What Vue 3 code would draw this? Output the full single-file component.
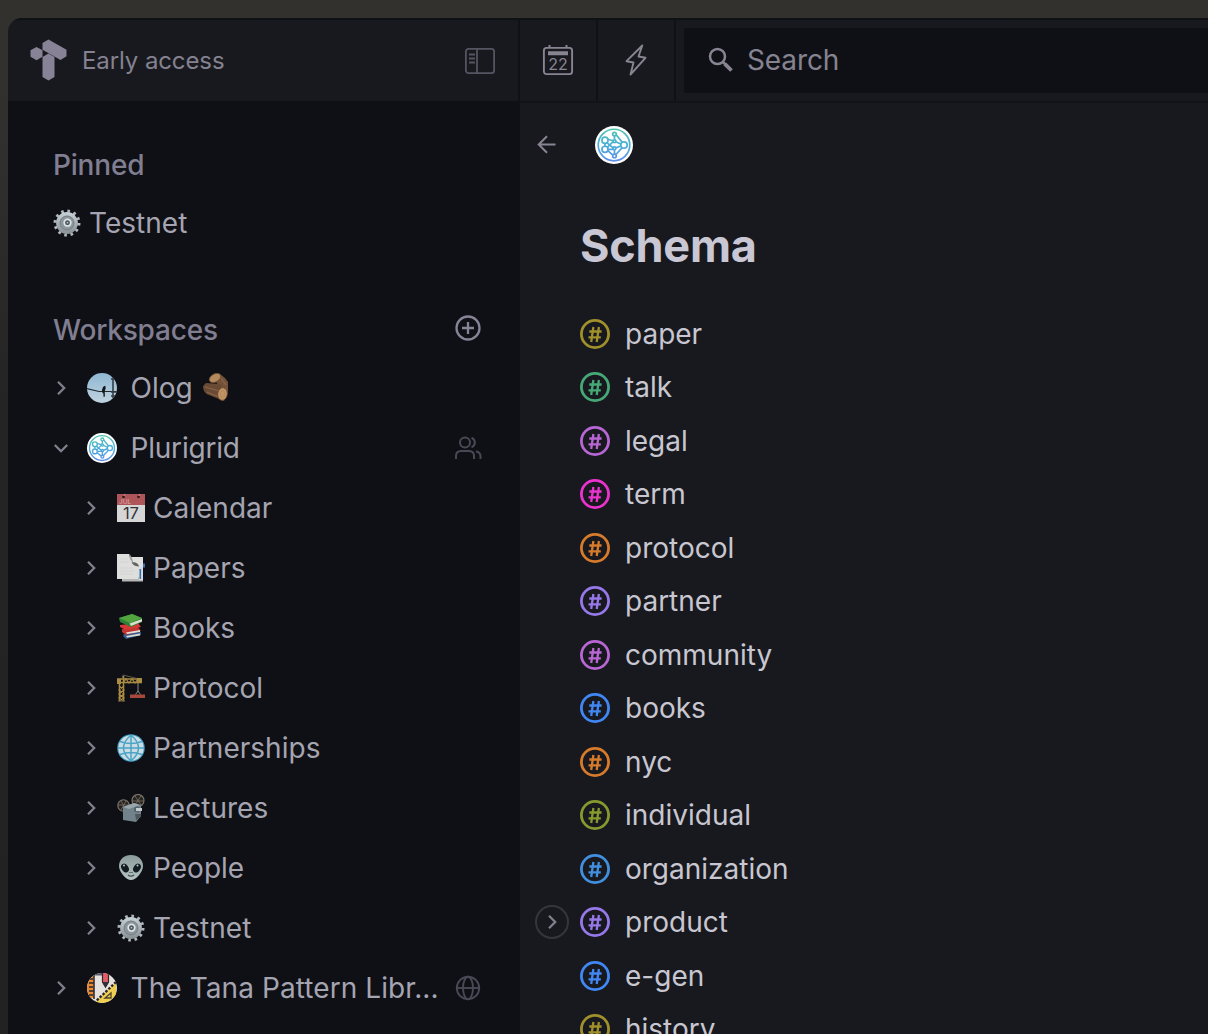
<script setup>
const folders = [
  { name: 'Calendar', icon: 'e-cal' },
  { name: 'Papers', icon: 'e-papers' },
  { name: 'Books', icon: 'e-books' },
  { name: 'Protocol', icon: 'e-crane' },
  { name: 'Partnerships', icon: 'e-globe' },
  { name: 'Lectures', icon: 'e-projector' },
  { name: 'People', icon: 'e-alien' },
  { name: 'Testnet', icon: 'e-gear' },
]
const tags = [
  { name: 'paper', color: '#a0902b' },
  { name: 'talk', color: '#47a877' },
  { name: 'legal', color: '#b766d4' },
  { name: 'term', color: '#ea33ce' },
  { name: 'protocol', color: '#d67a2b' },
  { name: 'partner', color: '#9678e8' },
  { name: 'community', color: '#b766d4' },
  { name: 'books', color: '#4187f3' },
  { name: 'nyc', color: '#d67a2b' },
  { name: 'individual', color: '#87992e' },
  { name: 'organization', color: '#418fdf' },
  { name: 'product', color: '#9678e8', open: true },
  { name: 'e-gen', color: '#4187f3' },
  { name: 'history', color: '#a0902b' },
]
</script>

<template>
  <div class="desktop">
    <svg class="defs" width="0" height="0" aria-hidden="true">
      <defs>
        <linearGradient id="teal" x1="0" y1="0" x2="0" y2="40" gradientUnits="userSpaceOnUse">
          <stop offset="0" stop-color="#50c8a4" /><stop offset=".5" stop-color="#4aafd8" /><stop offset="1" stop-color="#6389ee" />
        </linearGradient>
        <linearGradient id="metal" x1="0" y1="0" x2="0" y2="1">
          <stop offset="0" stop-color="#c3ced4" /><stop offset="1" stop-color="#8b9499" />
        </linearGradient>
        <linearGradient id="skin" x1="0" y1="0" x2="0" y2="1">
          <stop offset="0" stop-color="#8b9b9b" /><stop offset="1" stop-color="#b5c4c2" />
        </linearGradient>
        <linearGradient id="sky" x1="0" y1="0" x2="0" y2="1">
          <stop offset="0" stop-color="#8db6d2" /><stop offset="1" stop-color="#c2d4e0" />
        </linearGradient>
        <clipPath id="disc"><circle cx="16" cy="16" r="15" /></clipPath>
      </defs>
      <symbol id="right" viewBox="0 0 16 16">
        <path d="M5 1.800L11.200 8 5 14.200" fill="none" stroke="currentColor" stroke-width="2.300" />
      </symbol>
      <symbol id="grid" viewBox="0 0 40 40">
        <circle cx="20" cy="20" r="20" fill="#fff" />
        <g fill="none" stroke="url(#teal)" stroke-width="1.800">
          <circle cx="20" cy="20" r="16.600" />
          <circle cx="10.500" cy="15" r="3.200" /><circle cx="10.500" cy="24.500" r="3.200" /><circle cx="30.500" cy="20" r="3.400" />
          <circle cx="20.500" cy="8.500" r="1.900" /><circle cx="20.500" cy="16" r="1.500" /><circle cx="20.500" cy="23.500" r="1.500" /><circle cx="20.500" cy="31.500" r="1.900" />
          <path d="M20.500 10.500v4M22.500 9.500l6 7.500M22 16.500l5 2.500M22 23l5-2M28.500 23l-6.500 7M20.500 25v4.500M13.500 14l5.500 1.500M12.500 17.500l6.500 5.500M13 22.500l6-6M13.500 26l5 4.500M13.500 24.500h5.500M10.500 18v3" />
        </g>
      </symbol>
      <symbol id="bird" viewBox="0 0 32 32">
        <g clip-path="url(#disc)">
          <rect width="32" height="32" fill="url(#sky)" />
          <path d="M0 16.500l13 3h19" fill="none" stroke="#20282d" stroke-width="1.200" />
          <path d="M27 0v26M25 7h7M25 20h7M25 24h5" stroke="#353c42" stroke-width="1.600" />
          <path d="M16 20.500c0-3 .3-4.500 1.500-6l1.600-.8c.9 1 .6 3.500-.4 5.500l.2 5-1.200 1-.5-4.500z" fill="#111619" />
        </g>
      </symbol>
      <symbol id="tools" viewBox="0 0 32 32">
        <g clip-path="url(#disc)">
          <rect width="32" height="32" fill="#e4e1de" />
          <path d="M0 2h8v24H0z" fill="#e78a35" />
          <path d="M8 0v27M3 7h4M3 11h5M3 15h4M3 19h5M3 23h4" stroke="#29252a" stroke-width="1.500" />
          <path d="M8 0h9v3.500H8z" fill="#5b5966" />
          <path d="M16.500 0h6v10l-3 5-3-5z" fill="#e45b65" stroke="#29252a" stroke-width="1.200" />
          <path d="M16.500 10l3 5 3-5z" fill="#342f36" />
          <path d="M30 10v22H7z" fill="#efcf52" />
          <path d="M30 10L8 31" stroke="#29252a" stroke-width="2.400" stroke-dasharray="2.500 1.500" />
          <path d="M25 21v5h-6z" fill="none" stroke="#4d4130" stroke-width="1.300" />
        </g>
      </symbol>
      <symbol id="e-gear" viewBox="0 0 28 28">
        <circle cx="14" cy="14" r="11.900" fill="none" stroke="#b0b8bc" stroke-width="3.200" stroke-dasharray="2.600 3.631" />
        <circle cx="14" cy="14" r="9.200" fill="#878f94" stroke="url(#metal)" stroke-width="3.400" />
        <circle cx="14" cy="14" r="6.800" fill="#8d969b" stroke="#7b8388" stroke-width="1" />
        <circle cx="14.500" cy="13.700" r="3.300" fill="#4a525a" stroke="#dce5e8" stroke-width="1.700" />
        <circle cx="14.500" cy="13.700" r=".9" fill="#b8c2c6" />
      </symbol>
      <symbol id="e-wood" viewBox="0 0 28 28">
        <path d="M14 9l4-8 5 4 3 4v10l-6-2z" fill="#74523a" />
        <path d="M1 13l3-3 14 1 8 9-4 8-15-6c-4-1-6-5-6-9z" fill="#684a35" />
        <path d="M3 14l14 4M5 19l12 5M18 4l6 8" stroke="#8a6548" stroke-width="1.200" />
        <ellipse cx="13" cy="5" rx="6.200" ry="4" transform="rotate(-30 13 5)" fill="#b48a5c" stroke="#6a492f" stroke-width=".8" />
        <ellipse cx="20.500" cy="21" rx="4.800" ry="6.400" transform="rotate(8 20.500 21)" fill="#c19465" stroke="#654732" stroke-width=".8" />
        <ellipse cx="20.500" cy="21" rx="2.300" ry="3.300" fill="none" stroke="#b3875a" stroke-width=".8" />
      </symbol>
      <symbol id="e-papers" viewBox="0 0 28 28">
        <path d="M5 3h21v24.500H5z" fill="#b4b7b5" />
        <path d="M14 3h12v20H14z" fill="#e0e1df" />
        <path d="M21 13h5v13h-4z" fill="#d9dce0" /><path d="M26 9.500h2v4h-2zM22.500 15h1.600v10h-1.600z" fill="#3474ae" />
        <path d="M0 0h12c1 5 3 9 9 13v12H0z" fill="#dedfdd" />
        <path d="M12 0c2.500 1 3.500 6 4.500 9-3-2-4-5-4.500-9z" fill="#9c9f9c" />
        <path d="M14.500 8.500c4-1 7 1 7.500 4-3 0-5.500-1-7.500-4" fill="#62665f" />
        <path d="M3 5h8M3 8h9M3 14h13M3 17h14M3 20h13" stroke="#d0d0ce" stroke-width=".7" />
      </symbol>
      <symbol id="e-books" viewBox="0 0 28 28">
        <path d="M7 20l17-2v3L9 25l-3-3z" fill="#345b91" /><path d="M9 22l14-2.500v2L10 23.500z" fill="#d8d8d2" />
        <path d="M5 15l16-2 3 4-15 4-4-3z" fill="#bf3431" /><path d="M9 18.500L23 16v2l-13 2z" fill="#e2dfd9" />
        <path d="M3 11l18-2 3 4-15 3-6-3z" fill="#d63836" />
        <path d="M2 4l13-4 10 4v4l-11 5L3 8z" fill="#2f8137" /><path d="M2 4l13-4 10 4-12 5z" fill="#52a53e" />
        <path d="M12.500 9.500L25 5v2.500L14 12z" fill="#dadecb" />
      </symbol>
      <symbol id="e-crane" viewBox="0 0 28 28">
        <g fill="none" stroke="#a98b42">
          <path d="M2.500 6v21M6.500 2v25M0 5h25M0 8.500h25" stroke-width="1.500" />
          <path d="M2 12l5 4-5 4 5 4-5 3M7 12l-5 4 5 4-5 4 5 3M6 9l3-4 3 4 3-4 3 4 3-4 3 4" stroke-width="1.200" />
          <path d="M5 5l1-4 16 4" stroke="#756c55" stroke-width=".8" />
        </g>
        <path d="M0 5h4v5H0zM20 4h5v4h-5z" fill="#a98b42" />
        <path d="M21 9v9M18.500 20.500L21 17l2.500 3.500" fill="none" stroke="#8b8984" />
        <path d="M13 20.500h15v3.500H13z" fill="#a8483c" /><path d="M1 27h7" stroke="#77684a" />
      </symbol>
      <symbol id="e-globe" viewBox="0 0 28 28">
        <circle cx="14" cy="14" r="13.800" fill="#3d96bd" /><circle cx="14" cy="14" r="12.700" fill="#c9dde3" />
        <path d="M14 1v26M1 14h26M3 7.500q11 4 22 0M3 20.500q11-4 22 0M14 1Q-1 14 14 27M14 1q15 13 0 26" fill="none" stroke="#4ba3c7" stroke-width="1.500" />
      </symbol>
      <symbol id="e-projector" viewBox="0 0 28 28">
        <g fill="#242422" stroke="#80776b" stroke-width="1.100"><circle cx="6.500" cy="11.500" r="5.700" /><circle cx="21" cy="6.500" r="6" /></g>
        <path d="M1 11h11M4 7l5 9M9 7l-5 9M15 7h12M18 2l6 9M24 2l-6 9" stroke="#827466" stroke-width=".8" />
        <path d="M6 13l11-4 7 2v11l-5 6-13-2z" fill="#71828a" /><path d="M6 13l11-4 6 2-11 4z" fill="#98a7ac" />
        <circle cx="20" cy="15.500" r="3" fill="#53646c" /><path d="M19 14h6v3h-6z" fill="#c3cccc" /><path d="M18 20h6v3l-5 3z" fill="#4b585e" />
      </symbol>
      <symbol id="e-alien" viewBox="0 0 28 28">
        <path d="M14 1c7 0 12 4.500 12 11 0 6-7 14-12 14S2 18 2 12C2 5.500 7 1 14 1z" fill="url(#skin)" />
        <ellipse cx="8" cy="14" rx="3.400" ry="4.700" transform="rotate(-32 8 14)" fill="#111b20" /><ellipse cx="20" cy="14" rx="3.400" ry="4.700" transform="rotate(32 20 14)" fill="#111b20" />
        <circle cx="7" cy="11.500" r="1" fill="#b5c6c8" /><circle cx="20.500" cy="11.500" r="1" fill="#b5c6c8" />
        <path d="M11 21q3 2.500 6 0M13 18v1M15 18v1" fill="none" stroke="#3b4748" stroke-width="1.200" />
      </symbol>
    </svg>

    <div class="window">
      <header class="topbar">
        <div class="brand">
          <svg class="logo" width="38" height="43" viewBox="0 0 38 43" fill="#888297">
            <path d="M6.500 8l6 3.300v6.500l-6 3.400-6-3.400v-6.500z" />
            <path d="M12.500 4l6-3.500 18 10.300v6.500L30.500 21l-18-10.200z" />
            <path d="M18.500 14.500l6 3.400v20l-6 3.600-6-3.600v-20z" />
          </svg>
          <span class="early">Early access</span>
          <svg class="panel" width="32" height="28" viewBox="0 0 32 28" fill="none" stroke="#555461" stroke-width="1.800">
            <rect x="1.900" y="1.900" width="28.200" height="24.200" rx="2.600" /><path d="M13 2v24M5 7.500h6M5 11.500h6M5 15.500h6" />
          </svg>
        </div>
        <div class="tool">
          <svg width="32" height="32" viewBox="0 0 32 32" fill="none" stroke="#888492">
            <rect x="1.900" y="3.900" width="28.200" height="26.200" rx="2.600" stroke-width="1.900" />
            <path d="M7.500 1v3M24.500 1v3" stroke-width="2" /><path d="M6 9.200h20" stroke-width="4" />
            <text x="16" y="25.500" text-anchor="middle" font-family="Inter, sans-serif" font-size="16" fill="#888492" stroke="none">22</text>
          </svg>
        </div>
        <div class="tool">
          <svg width="22" height="32" viewBox="0 0 22 32" fill="none" stroke="#888492" stroke-width="1.900" stroke-linejoin="round">
            <path d="M17.300 1.500L1.500 17.200l7 1.300L5.500 30.500l15-16.700-7-1.300z" />
          </svg>
        </div>
        <div class="search">
          <svg width="26" height="26" viewBox="0 0 26 26" fill="none" stroke="#888492">
            <circle cx="9.500" cy="9.500" r="7.500" stroke-width="2.500" /><path d="M14.800 14.800l2.700 2.700" stroke-width="2.500" /><path d="M16.800 16.800l6.700 6.700" stroke-width="3.800" />
          </svg>
          <span class="placeholder">Search</span>
        </div>
      </header>

      <div class="body">
        <aside class="sidebar">
          <h2 class="heading">Pinned</h2>
          <div class="row pinned"><svg class="emoji"><use href="#e-gear" /></svg><span>Testnet</span></div>
          <div class="heading workspaces">
            <span>Workspaces</span>
            <svg width="28" height="28" viewBox="0 0 28 28" fill="none" stroke="#888297" stroke-width="2.300">
              <circle cx="14" cy="14" r="11.500" /><path d="M14 8v12M8 14h12" />
            </svg>
          </div>
          <div class="row space">
            <svg class="chev"><use href="#right" /></svg>
            <svg class="avatar"><use href="#bird" /></svg>
            <span>Olog</span><svg class="emoji wood"><use href="#e-wood" /></svg>
          </div>
          <div class="row space">
            <svg class="chev down"><use href="#right" /></svg>
            <svg class="avatar white"><use href="#grid" /></svg>
            <span class="plurigrid">Plurigrid</span>
            <svg class="end" width="28" height="28" viewBox="0 0 28 28" fill="none" stroke="#494955" stroke-width="2">
              <circle cx="11" cy="8.500" r="5" /><path d="M2 25v-3q0-5 5-5h8q5 0 5 5v3M17.500 3.800a5 5 0 0 1 0 9.400M22 17.200q4.500 1.200 4.500 5V25" />
            </svg>
          </div>
          <div v-for="f in folders" :key="f.name" class="row folder">
            <svg class="chev"><use href="#right" /></svg>
            <svg v-if="f.icon === 'e-cal'" class="emoji" viewBox="0 0 28 28">
              <path d="M0 0h28v28H0z" fill="#d7d6d7" /><path d="M0 0h28v11H0z" fill="#ad5559" />
              <circle cx="6.500" cy="2.800" r="1.400" fill="#33191c" /><circle cx="21.500" cy="2.800" r="1.400" fill="#33191c" />
              <path d="M6.500 2l2-2M21.500 2l2-2" stroke="#d39c9c" />
              <text x="2" y="9.800" font-size="6.500" fill="#e0aaaa" font-family="Inter, sans-serif">JUL</text>
              <text x="13.800" y="25" text-anchor="middle" font-size="16.500" letter-spacing="-.3" fill="#333336" font-family="Inter, sans-serif">17</text>
            </svg>
            <svg v-else class="emoji"><use :href="'#' + f.icon" /></svg>
            <span>{{ f.name }}</span>
          </div>
          <div class="row space">
            <svg class="chev"><use href="#right" /></svg>
            <svg class="avatar"><use href="#tools" /></svg>
            <span class="library">The Tana Pattern Libr...</span>
            <svg class="end" width="28" height="28" viewBox="0 0 28 28" fill="none" stroke="#494955" stroke-width="1.900">
              <circle cx="14" cy="14" r="11.200" /><ellipse cx="14" cy="14" rx="5" ry="11.200" /><path d="M3 14h22" />
            </svg>
          </div>
        </aside>

        <main class="main">
          <nav class="crumbs">
            <svg width="20" height="20" viewBox="0 0 20 20" fill="none" stroke="#888492" stroke-width="2"><path d="M19.500 9.500H3M11 1.200L2.700 9.500l8.300 8.300" /></svg>
            <svg class="crumb-avatar"><use href="#grid" /></svg>
          </nav>
          <h1 class="title">Schema</h1>
          <ul class="tags">
            <li v-for="t in tags" :key="t.name" class="tag">
              <span v-if="t.open" class="expander"><svg class="chev"><use href="#right" /></svg></span>
              <svg class="hash" viewBox="0 0 30 30" fill="none" :stroke="t.color">
                <circle cx="15" cy="15" r="13.600" stroke-width="2.800" />
                <path d="M13.400 8l-2.200 15M18.900 8l-2.200 15M9.300 12.500h12.300M8.500 18.300h12.300" stroke-width="2.300" />
              </svg>
              <span class="tag-name">{{ t.name }}</span>
            </li>
          </ul>
        </main>
      </div>
    </div>
  </div>
</template>

<style>
html, body { margin: 0; overflow: hidden; background: #31302d; }
</style>

<style scoped>
* { box-sizing: border-box; }
svg { display: block; flex: none; }
.defs { position: absolute; }
.desktop {
  width: 1208px; height: 1034px; padding: 18px 0 0 8px; overflow: hidden;
  background: linear-gradient(#32312e 0, #31302e 140px, #252424 400px, #222223 100%);
  font-family: Inter, "Liberation Sans", sans-serif; font-size: 28px; color: #a5a4b1;
}
.window { width: 1200px; height: 1016px; overflow: hidden; border-radius: 14px 0 0 0; background: #18191e; display: flex; flex-direction: column; }
.topbar { height: 85px; flex: none; display: flex; border-top: 2px solid #101115; border-bottom: 2px solid #121318; }
.brand { width: 512px; display: flex; align-items: center; padding: 0 0 0 22px; border-right: 2px solid #101115; }
.early { margin-left: 14px; font-size: 24px; letter-spacing: -.1px; color: #848290; }
.panel { margin-left: auto; margin-right: 22px; }
.tool { width: 78px; padding-bottom: 1px; display: flex; align-items: center; justify-content: center; border-right: 2px solid #101115; }
.search { flex: 1; margin: 8px 0 8px 8px; padding: 0 0 2px 24px; display: flex; align-items: center; gap: 13px; background: #0f1015; color: #858390; }
.placeholder { letter-spacing: -.1px; }
.body { flex: 1; min-height: 0; display: flex; }
.sidebar { width: 512px; flex: none; margin-top: -2px; padding: 44px 0 0 45px; background: #0f1015; overflow: hidden; }
.heading { margin: 0; height: 40px; line-height: 40px; font-size: 28px; font-weight: 500; letter-spacing: -.2px; color: #817e91; }
.workspaces { display: flex; align-items: center; justify-content: space-between; margin-top: 58px; margin-bottom: 8px; padding-right: 38px; }
.workspaces svg { margin-top: -5px; }
.row { height: 60px; display: flex; align-items: center; letter-spacing: .02px; white-space: nowrap; }
.pinned { height: 58px; margin-top: 9px; }
.emoji { width: 28px; height: 28px; margin-right: 8px; }
.pinned .emoji, .folder .emoji { margin-top: -1px; }
.chev { width: 16px; height: 16px; color: #817f8c; }
.down { transform: rotate(90deg); }
.avatar { width: 32px; height: 32px; margin: 0 12.5px 0 17px; }
.white { width: 30px; height: 30px; margin: 0 13.5px 0 18px; }
.plurigrid { letter-spacing: -.2px; }
.library { letter-spacing: .08px; }
.wood { margin-left: 9px; margin-top: -2px; }
.folder { padding-left: 30px; }
.folder .emoji { margin-left: 18px; margin-right: 8px; }
.end { margin-left: auto; margin-right: 38px; }
.main { flex: 1; padding-left: 60px; }
.crumbs { height: 83px; margin-left: -44px; display: flex; align-items: center; }
.crumb-avatar { width: 38px; height: 38px; margin-left: 39px; }
.title { margin: 30px 0 0; height: 60px; line-height: 60px; font-size: 45px; font-weight: 700; letter-spacing: -.2px; color: #c8c7d3; }
.tags { list-style: none; margin: 31px 0 0; padding: 0; }
.tag { position: relative; height: 53.5px; display: flex; align-items: center; color: #c8c7d1; }
.hash { width: 30px; height: 30px; }
.tag-name { margin-left: 15px; letter-spacing: 0; }
.expander { position: absolute; left: -45px; top: 9px; width: 34px; height: 34px; display: flex; align-items: center; justify-content: center; border: 2px solid #35363c; border-radius: 50%; }
</style>
